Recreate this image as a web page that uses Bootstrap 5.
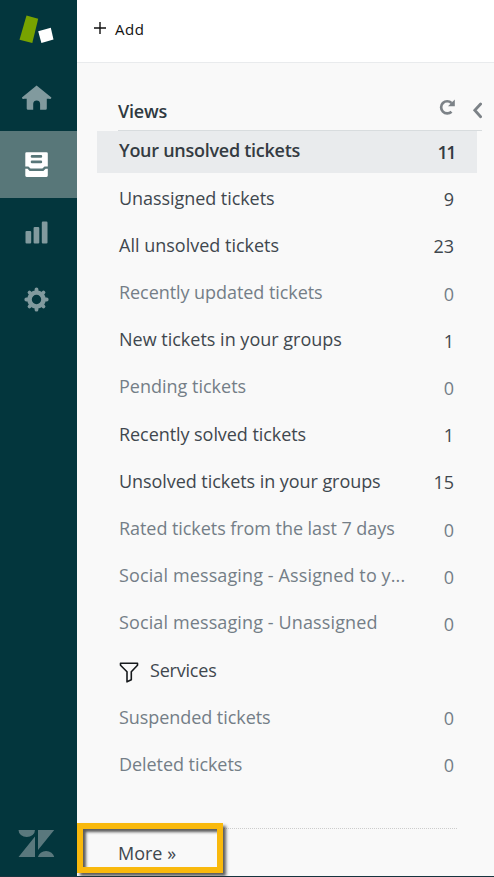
<!DOCTYPE html>
<html lang="en">
<head>
<meta charset="utf-8">
<meta name="viewport" content="width=device-width, initial-scale=1">
<title>Views</title>
<link href="https://cdn.jsdelivr.net/npm/bootstrap@5.3.0/dist/css/bootstrap.min.css" rel="stylesheet">
<style>
body{font-family:"Open Sans","Noto Sans",sans-serif;background:#f9f9f9;color:#3c434a;height:877px;overflow:hidden}
.app{height:877px;border-bottom:1px solid #17343f}
.side{width:77px;background:#03363d;color:#819a9e}
.side svg{display:block}
.logo{height:64px}
.side-link{height:67px;width:77px;color:inherit}
.side-link.active{background:#587779;color:#fff}
.brand{height:67px}
.topbar{height:63px;background:#fff;border-bottom:1px solid #e9ebed;padding:0 0 4px 16px;color:#111}
.add{font-size:15px;letter-spacing:.5px}
.views-head{height:68px;margin-left:41px;margin-right:12px;border-bottom:1px solid #d8dcde;padding-top:29px}
.views-title{font-size:18px;line-height:38px;font-weight:600;color:#2f3941;letter-spacing:-.2px}
.view-list{margin-left:20px;margin-right:17px}
.view-list .view{height:42px;margin-bottom:5.2px;padding:0 23px 3px 22px;border:0;background:transparent;color:#40474e;font-size:18px;line-height:38px;letter-spacing:0}
.view-list .view.muted{color:#747e87}
.view-list .view.current{background:#e9ebed;color:#343b42;font-weight:600;letter-spacing:-.27px;margin-bottom:5.65px}
.view .name{white-space:nowrap}
.view.wide .name{letter-spacing:.12px}
.view.tight .name{letter-spacing:-.06px}
.view.snug .name{letter-spacing:-.2px}
.view .count{position:relative;top:1.6px;letter-spacing:0}
.view.current .count{letter-spacing:-1.6px;left:1px;top:2px}
.more-zone{height:48px}
.more-line{margin-left:41px;margin-right:37px;border-top:1px dotted #ccc}
.more-link{color:#40474e;font-size:18px;line-height:26px;margin:11px 0 0 41px}
.callout{position:absolute;left:0;top:-5px;width:146px;height:50px;border:6px solid #f9b90d;box-shadow:3px 3px 3px #333c,inset 3px 3px 3px #333c;pointer-events:none}
</style>
<script src="https://cdn.jsdelivr.net/npm/bootstrap@5.3.0/dist/js/bootstrap.bundle.min.js"></script>
</head>
<body>
<div class="app d-flex">
<nav class="side d-flex flex-column flex-shrink-0">
<div class="logo"><svg width="77" height="64"><path d="M26.5 15.5 38.2 18.8 32.3 43 19.5 39.7Z" fill="#78a300"/><path d="M38.2 31.2 50.8 27.8 53.5 39.5 41.4 43Z" fill="#fff"/></svg></div>
<a class="side-link" href="#" aria-label="Home"><svg width="77" height="67" viewBox="0 64 77 67"><path d="M36.6 85.4 51.4 97.4Q51.3 99.3 49 98.8H46.8V108.4Q46.8 109.8 45.5 109.8H40.1V103.8Q39.8 100.6 36.7 100.6T33.2 103.8V109.8H28Q26.7 109.8 26.7 108.4V98.8H24.4Q22 99.3 21.9 97.4Z" fill="currentColor"/></svg></a>
<a class="side-link active" href="#" aria-label="Views"><svg width="77" height="67" viewBox="0 131 77 67"><path fill="currentColor" fill-rule="evenodd" d="M26.5 152.2H46.5Q47.8 152.2 47.8 153.5V166.5H44.5L42.4 168.6H30.5L28.4 166.5H25.3V153.5Q25.3 152.2 26.5 152.2ZM32 155.1Q30.7 155.1 30.7 156.4T32 157.7H41Q42.2 157.7 42.2 156.4T41 155.1ZM32 160.6Q30.7 160.6 30.7 161.9T32 163.2H41Q42.2 163.2 42.2 161.9T41 160.6Z"/><path fill="currentColor" d="M25.3 168.8H27.6L29.6 171H43.4L45.6 168.8H47.8V175.6Q47.8 176.9 46.5 176.9H26.6Q25.3 176.9 25.3 175.6Z"/></svg></a>
<a class="side-link" href="#" aria-label="Reporting"><svg width="77" height="67" viewBox="0 198 77 67" fill="currentColor"><rect x="25.5" y="231" width="5.7" height="12.5" rx="1.1"/><rect x="33.6" y="227" width="5.7" height="16.5" rx="1.1"/><rect x="41.8" y="221.6" width="5.7" height="21.9" rx="1.1"/></svg></a>
<a class="side-link" href="#" aria-label="Admin"><svg width="77" height="67" viewBox="-36.5 -34.5 77 67" fill="none" stroke="currentColor"><circle r="7" stroke-width="4.6"/><path stroke-width="3.8" stroke-linecap="round" d="M0-8.7V-10.2M0 8.7V10.2M8.7 0H10.2M-8.7 0H-10.2M6.2-6.2 7-7M6.2 6.2 7 7M-6.2 6.2-7 7M-6.2-6.2-7-7"/></svg></a>
<div class="brand mt-auto"><svg width="77" height="67" viewBox="0 809 77 67"><path d="M18.5 830H35A8.2 7 0 0 1 18.5 830ZM35 836.5V857H18.5ZM38 830H54.2L38 850ZM38 857A8.2 7.2 0 0 1 54.2 857Z" fill="#5a787d"/></svg></div>
</nav>
<main class="flex-grow-1 d-flex flex-column">
<header class="topbar d-flex align-items-center"><svg class="me-2" width="14" height="16"><path d="M7 1V13M1 7H13" stroke="#111" stroke-width="1.4"/></svg><span class="add">Add</span></header>
<div class="views-head d-flex"><h1 class="views-title m-0 me-auto">Views</h1>
<svg width="48" height="36" viewBox="434 92 48 36" fill="none" stroke="#7c8287"><path d="M451.5 111.7A6.1 6.1 0 1 1 451.5 103" stroke-width="2.7"/><path d="M454.8 99.5V106.3H448Z" fill="#7c8287" stroke="none"/><path d="M480.6 104 474.8 110.3 480.6 116.7" stroke-width="2.8" stroke-linecap="round"/></svg></div>
<div class="view-list list-group rounded-0">
<a class="view current text-decoration-none d-flex" href="#"><span class="name me-auto">Your unsolved tickets</span><span class="count">11</span></a>
<a class="view tight text-decoration-none d-flex" href="#"><span class="name me-auto">Unassigned tickets</span><span class="count">9</span></a>
<a class="view text-decoration-none d-flex" href="#"><span class="name me-auto">All unsolved tickets</span><span class="count">23</span></a>
<a class="view muted tight text-decoration-none d-flex" href="#"><span class="name me-auto">Recently updated tickets</span><span class="count">0</span></a>
<a class="view text-decoration-none d-flex" href="#"><span class="name me-auto">New tickets in your groups</span><span class="count">1</span></a>
<a class="view muted text-decoration-none d-flex" href="#"><span class="name me-auto">Pending tickets</span><span class="count">0</span></a>
<a class="view tight text-decoration-none d-flex" href="#"><span class="name me-auto">Recently solved tickets</span><span class="count">1</span></a>
<a class="view tight text-decoration-none d-flex" href="#"><span class="name me-auto">Unsolved tickets in your groups</span><span class="count">15</span></a>
<a class="view muted tight text-decoration-none d-flex" href="#"><span class="name me-auto">Rated tickets from the last 7 days</span><span class="count">0</span></a>
<a class="view muted wide text-decoration-none d-flex" href="#"><span class="name me-auto">Social messaging - Assigned to y...</span><span class="count">0</span></a>
<a class="view muted wide text-decoration-none d-flex" href="#"><span class="name me-auto">Social messaging - Unassigned</span><span class="count">0</span></a>
<a class="view snug text-decoration-none d-flex" href="#"><svg class="me-2" width="23" height="40" viewBox="0 0 23 40" fill="none"><path d="M1.5 12.3H18.5V14.3L12.3 20.8V28.8L8 30.8V20.8L1.5 14.3Z" stroke="#16191c" stroke-width="1.6" stroke-linejoin="round"/></svg><span class="name me-auto">Services</span></a>
<a class="view muted tight text-decoration-none d-flex" href="#"><span class="name me-auto">Suspended tickets</span><span class="count">0</span></a>
<a class="view muted tight text-decoration-none d-flex" href="#"><span class="name me-auto">Deleted tickets</span><span class="count">0</span></a>
</div>
<div class="more-zone mt-auto position-relative"><div class="more-line"></div><a class="more-link d-block text-decoration-none" href="#">More »</a><div class="callout"></div></div>
</main>
</div>
</body>
</html>
